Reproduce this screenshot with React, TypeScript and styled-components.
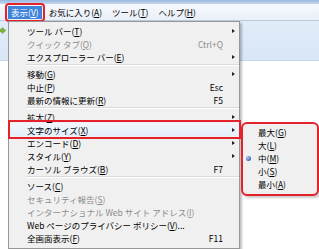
import React from 'react';
import styled, { createGlobalStyle } from 'styled-components';

const GlobalStyle = createGlobalStyle`
	html, body {
		margin: 0;
		padding: 0;
		background: #fff;
	}
	body {
		font-family: 'Noto Sans CJK JP', 'Noto Sans', sans-serif;
	}
`;

const Screen = styled.div`
	position: relative;
	width: 319px;
	height: 249px;
	overflow: hidden;
	background: #fff;
	font-size: 8.5px;
	color: #000;
`;

const TitleStrip = styled.div`
	height: 4px;
	background: linear-gradient(#9bb9e0, #c4d7ef);
`;

const MenuBar = styled.div`
	display: flex;
	align-items: center;
	height: 16px;
	padding-left: 8px;
	background: linear-gradient(#f7f9fd, #e9eff8);
	border-bottom: 1px solid #b9c9de;
`;

const BarItem = styled.div<{ $active?: boolean }>`
	position: relative;
	padding: 0 3px;
	margin-right: 4px;
	height: 13px;
	line-height: 13px;
	background: ${(p) => (p.$active ? '#3d83d9' : 'transparent')};
	color: ${(p) => (p.$active ? '#fff' : '#000')};
`;

const RedMark = styled.div<{ $radius: number }>`
	position: absolute;
	inset: -3px;
	border: 2px solid #e3222b;
	border-radius: ${(p) => p.$radius}px;
	pointer-events: none;
`;

const Toolbar = styled.div`
	height: 40px;
	padding-top: 6px;
	box-sizing: border-box;
	background: linear-gradient(#e1ecf9, #d8e6f6);
	border-bottom: 1px solid #c7d6e8;
`;

const PageBody = styled.div`
	height: 190px;
	background: #fff;
`;

const Dropdown = styled.div`
	position: absolute;
	left: 8px;
	top: 21px;
	width: 230px;
	padding: 2px 0 4px;
	background: #f0f0f0;
	border: 1px solid #979797;
	box-shadow: 2px 2px 2px rgba(0, 0, 0, 0.25);
`;

const Row = styled.div<{ $disabled?: boolean; $hot?: boolean }>`
	position: relative;
	display: grid;
	grid-template-columns: 1fr auto 16px;
	align-items: center;
	height: 13px;
	padding-left: 18px;
	white-space: nowrap;
	color: ${(p) => (p.$disabled ? '#8c8c8c' : '#000')};
	background: ${(p) => (p.$hot ? 'linear-gradient(#f2f7fd, #e4eefb)' : 'transparent')};
`;

const Shortcut = styled.span`
	text-align: right;
`;

const Arrow = styled.span`
	justify-self: center;
	width: 0;
	height: 0;
	border-top: 2.5px solid transparent;
	border-bottom: 2.5px solid transparent;
	border-left: 3px solid #222;
	margin-left: 4px;
`;

const Separator = styled.div`
	height: 4px;
	margin-left: 17px;
	display: flex;
	flex-direction: column;
	justify-content: center;
	&::before {
		content: '';
		height: 1px;
		background: #dadada;
	}
	&::after {
		content: '';
		height: 1px;
		background: #fff;
	}
`;

const RowMark = styled.div`
	position: absolute;
	left: -1px;
	right: -2px;
	top: -3px;
	bottom: -3px;
	border: 2px solid #e3222b;
	pointer-events: none;
`;

const Submenu = styled.div`
	position: absolute;
	left: 232px;
	top: -1px;
	width: 74px;
	padding: 2px 0 3px;
	background: #f0f0f0;
	border: 2px solid #e3222b;
	border-radius: 6px;
	box-shadow: 2px 2px 2px rgba(0, 0, 0, 0.2);
`;

const SubRow = styled.div`
	position: relative;
	height: 13px;
	line-height: 13px;
	padding-left: 15px;
	white-space: nowrap;
`;

const RadioDot = styled.span`
	position: absolute;
	left: 3px;
	top: 4px;
	width: 5px;
	height: 5px;
	border-radius: 50%;
	background: radial-gradient(circle at 35% 35%, #b8cdf2, #3f63b8 70%);
`;

function GoIcon() {
	return (
		<svg width="7" height="7" viewBox="0 0 7 7" style={{ display: 'block', marginLeft: -1 }}>
			<path d="M0 2.2h3.2V0.4L6.8 3.5 3.2 6.6V4.8H0z" fill="#7cb32f" stroke="#4f8a1c" strokeWidth="0.5" />
		</svg>
	);
}

type Item =
	| { sep: true }
	| {
			sep?: false;
			label: string;
			key: string;
			tail?: string;
			shortcut?: string;
			sub?: boolean;
			disabled?: boolean;
			hot?: boolean;
	  };

const items: Item[] = [
	{ label: 'ツール バー', key: 'T', sub: true },
	{ label: 'クイック タブ', key: 'Q', shortcut: 'Ctrl+Q', disabled: true },
	{ label: 'エクスプローラー バー', key: 'E', sub: true },
	{ sep: true },
	{ label: '移動', key: 'G', sub: true },
	{ label: '中止', key: 'P', shortcut: 'Esc' },
	{ label: '最新の情報に更新', key: 'R', shortcut: 'F5' },
	{ sep: true },
	{ label: '拡大', key: 'Z', sub: true },
	{ label: '文字のサイズ', key: 'X', sub: true, hot: true },
	{ label: 'エンコード', key: 'D', sub: true },
	{ label: 'スタイル', key: 'Y', sub: true },
	{ label: 'カーソル ブラウズ', key: 'B', shortcut: 'F7' },
	{ sep: true },
	{ label: 'ソース', key: 'C' },
	{ label: 'セキュリティ報告', key: 'S', disabled: true },
	{ label: 'インターナショナル Web サイト アドレス', key: 'I', disabled: true },
	{ label: 'Web ページのプライバシー ポリシー', key: 'V', tail: '...' },
	{ label: '全画面表示', key: 'F', shortcut: 'F11' },
];

const sizes = [
	{ label: '最大', key: 'G' },
	{ label: '大', key: 'L' },
	{ label: '中', key: 'M', checked: true },
	{ label: '小', key: 'S' },
	{ label: '最小', key: 'A' },
];

function Label({ text, k, tail }: { text: string; k: string; tail?: string }) {
	return (
		<span>
			{text}(<u>{k}</u>){tail}
		</span>
	);
}

export default function App() {
	return (
		<>
			<GlobalStyle />
			<Screen>
				<TitleStrip />
				<MenuBar>
					<BarItem $active>
						<Label text="表示" k="V" />
						<RedMark $radius={4} />
					</BarItem>
					<BarItem>
						<Label text="お気に入り" k="A" />
					</BarItem>
					<BarItem>
						<Label text="ツール" k="T" />
					</BarItem>
					<BarItem>
						<Label text="ヘルプ" k="H" />
					</BarItem>
				</MenuBar>
				<Toolbar>
					<GoIcon />
				</Toolbar>
				<PageBody />

				<Dropdown>
					{items.map((it, i) =>
						it.sep ? (
							<Separator key={i} />
						) : (
							<Row key={i} $disabled={it.disabled} $hot={it.hot}>
								<Label text={it.label} k={it.key} tail={it.tail} />
								<Shortcut>{it.shortcut}</Shortcut>
								{it.sub ? <Arrow /> : <span />}
								{it.hot && (
									<>
										<RowMark />
										<Submenu>
											{sizes.map((s) => (
												<SubRow key={s.key}>
													{s.checked && <RadioDot />}
													<Label text={s.label} k={s.key} />
												</SubRow>
											))}
										</Submenu>
									</>
								)}
							</Row>
						)
					)}
				</Dropdown>
			</Screen>
		</>
	);
}
